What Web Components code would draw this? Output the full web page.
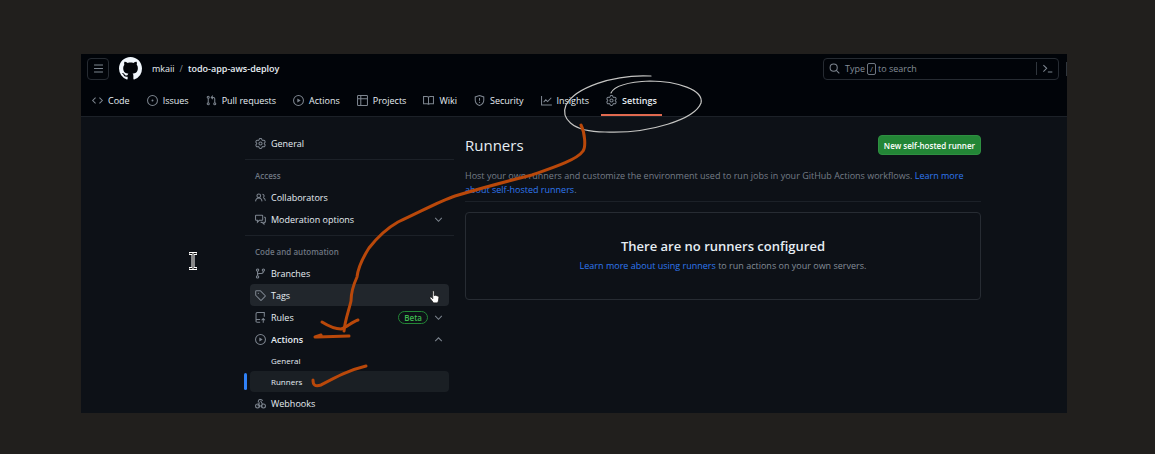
<!DOCTYPE html>
<html lang="en">
<head>
<meta charset="utf-8">
<title>Runners · todo-app-aws-deploy</title>
<style>
body { margin: 0; background: #211f1d; font-family: "Open Sans", "Noto Sans", sans-serif; font-size: 9px; color: #e6edf3; }
</style>
</head>
<body>
<settings-page></settings-page>
<script>
const GEAR = '<path transform="translate(.7 .7) scale(.9125)" stroke-width="1.6" d="M8 0a8.2 8.2 0 0 1 .701.031C9.444.095 9.99.645 10.16 1.29l.288 1.107c.018.066.079.158.212.224.231.114.454.243.668.386.123.082.233.09.299.071l1.103-.303c.644-.176 1.392.021 1.82.63.27.385.506.792.704 1.218.315.675.111 1.422-.364 1.891l-.814.806c-.049.048-.098.147-.088.294.016.257.016.515 0 .772-.01.147.038.246.088.294l.814.806c.475.469.679 1.216.364 1.891a7.977 7.977 0 0 1-.704 1.217c-.428.61-1.176.807-1.82.63l-1.102-.302c-.067-.019-.177-.011-.3.071a5.909 5.909 0 0 1-.668.386c-.133.066-.194.158-.211.224l-.29 1.106c-.168.646-.715 1.196-1.458 1.26a8.006 8.006 0 0 1-1.402 0c-.743-.064-1.289-.614-1.458-1.26l-.289-1.106c-.018-.066-.079-.158-.212-.224a5.738 5.738 0 0 1-.668-.386c-.123-.082-.233-.09-.299-.071l-1.103.303c-.644.176-1.392-.021-1.82-.63a8.12 8.12 0 0 1-.704-1.218c-.315-.675-.111-1.422.363-1.891l.815-.806c.05-.048.098-.147.088-.294a6.214 6.214 0 0 1 0-.772c.01-.147-.038-.246-.088-.294l-.815-.806C.635 6.045.431 5.298.746 4.623a7.92 7.92 0 0 1 .704-1.217c.428-.61 1.176-.807 1.82-.63l1.102.302c.067.019.177.011.3-.071.214-.143.437-.272.668-.386.133-.066.194-.158.211-.224l.29-1.106C6.009.645 6.556.095 7.299.03 7.53.01 7.764 0 8 0Z"/><circle cx="8" cy="8" r="2.3"/>';
const ICONS = {
  menu: '<path d="M1.500 3h13M1.500 8h13M1.500 13h13"/>',
  mark: '<path fill="currentColor" stroke="none" d="M8 0c4.42 0 8 3.58 8 8a8.013 8.013 0 0 1-5.45 7.59c-.4.08-.55-.17-.55-.38 0-.27.01-1.13.01-2.2 0-.75-.25-1.23-.54-1.48 1.78-.2 3.65-.88 3.65-3.95 0-.88-.31-1.59-.82-2.15.08-.2.36-1.02-.08-2.12 0 0-.67-.22-2.2.82-.64-.18-1.32-.27-2-.27-.68 0-1.36.09-2 .27-1.53-1.03-2.2-.82-2.2-.82-.44 1.1-.16 1.92-.08 2.12-.51.56-.82 1.28-.82 2.15 0 3.06 1.86 3.75 3.64 3.95-.23.2-.44.55-.51 1.07-.46.21-1.61.55-2.33-.66-.15-.24-.6-.83-1.23-.82-.67.01-.27.38.01.53.34.19.73.9.82 1.13.16.45.68 1.31 2.69.94 0 .67.01 1.3.01 1.49 0 .21-.15.45-.55.38A7.995 7.995 0 0 1 0 8c0-4.42 3.58-8 8-8Z"/>',
  code: '<path d="M5.200 3.800 1 8l4.200 4.200M10.800 3.800 15 8l-4.200 4.200"/>',
  issue: '<circle cx="8" cy="8" r="7.200"/><circle cx="8" cy="8" r="1.400" fill="currentColor" stroke="none"/>',
  pull: '<circle cx="3.250" cy="3.250" r="1.500"/><circle cx="3.250" cy="12.750" r="1.500"/><circle cx="12.750" cy="12.750" r="1.500"/><path d="M3.250 4.750v6.500M12.750 11.250V5.500c0-1.200-.8-2-2-2H8M10 1 7.600 3.500 10 6"/>',
  play: '<circle cx="8" cy="8" r="7.200"/><path fill="currentColor" stroke="none" d="M6.300 5.200v5.600L11.200 8Z"/>',
  project: '<rect x=".8" y=".8" width="14.400" height="14.400" rx="1"/><path d="M5.500 1v14M1 5.500h14"/>',
  book: '<path d="M8 4c0-.9-.9-1.800-2.200-1.800H.8v10.600h5.400c1 0 1.800.6 1.800 1.400 0-.8.8-1.400 1.800-1.400h5.400V2.200h-5C8.900 2.200 8 3.100 8 4v10"/>',
  shield: '<path d="M8 .8 14.200 2.900v4.600c0 3.700-2.600 6.300-6.200 7.700-3.600-1.400-6.200-4-6.200-7.700V2.900ZM8 4.300v4"/><circle cx="8" cy="10.700" r="1" fill="currentColor" stroke="none"/>',
  graph: '<path d="M.8 1.500v13h15M3.800 10.500 7 7l2.600 2.600L15 4"/>',
  gear: GEAR,
  people: '<circle cx="5.500" cy="5.500" r="2.700"/><path d="M.8 13.700c.3-3 2.200-4.900 4.700-4.900s4.400 1.900 4.700 4.900M10.800 3.300a2.400 2.400 0 0 1 1.200 4.500M12 8.200c1.700.8 2.800 2.400 3.100 4.500"/>',
  discuss: '<path d="M1.700 1.800h8.600c.6 0 .9.300.9.900v5.600c0 .6-.3.900-.9.900H6.200L3.500 11.900V9.200H1.700c-.6 0-.9-.3-.9-.9V2.700c0-.6.3-.9.9-.9ZM13.200 4.800h1c.6 0 .9.300.9.900v5.600c0 .6-.3.900-.9.900h-1.200v2.500l-2.700-2.500H8.200"/>',
  branch: '<circle cx="3.700" cy="3" r="1.700"/><circle cx="3.700" cy="13" r="1.700"/><circle cx="12.200" cy="3" r="1.700"/><path d="M3.700 4.700v6.600M12.200 4.700c0 2-1 3.300-3 3.300H6c-1.300 0-2.300.8-2.300 2"/>',
  tag: '<path d="M1 2v5.300c0 .3.100.5.300.7l6.700 6.700c.4.400 1 .4 1.400 0l5.300-5.300c.4-.4.4-1 0-1.400L8 1.300A1 1 0 0 0 7.300 1H2a1 1 0 0 0-1 1Z"/><circle cx="4.900" cy="4.900" r="1" fill="currentColor" stroke="none"/>',
  rules: '<path d="M7.500 15H3.200A1.700 1.700 0 0 1 1.500 13.300V2.700C1.500 1.600 2.300.8 3.400.8h10.100V7M1.500 12.500c0-1 .8-1.700 1.700-1.700h4.300M12 15.500V9.800M9.500 12 12 9.500l2.500 2.500"/>',
  webhook: '<circle cx="3.700" cy="11.500" r="2.900"/><circle cx="12.300" cy="11.500" r="2.900"/><path d="M5 6.500a3.200 3.200 0 1 1 6-2.400M4 11.400 6.700 6.700M8.100 3.900l3 5.400M4.500 11.500h6.800"/>',
  search: '<circle cx="6.800" cy="6.800" r="5.200"/><path d="m10.700 10.700 4.300 4.300"/>',
  terminal: '<path d="m2 3 4.800 4.700L2 12.400M8.500 13H15"/>',
  down: '<path d="m3.200 5.800 4.800 4.800 4.800-4.800"/>',
  up: '<path d="m3.200 10.400 4.800-4.800 4.800 4.800"/>'
};

function define(name, css, html) {
  customElements.define(name, class extends HTMLElement {
    connectedCallback() {
      if (this.shadowRoot) return;
      const body = typeof html === 'function' ? html(this) : html;
      this.attachShadow({ mode: 'open' }).innerHTML = `<style>*{box-sizing:border-box}${css}</style>${body}`;
    }
  });
}

define('gh-icon',
  `:host{display:block;flex:none;width:11px;height:11px;color:#7d858f}
   svg{display:block;width:100%;height:100%;overflow:visible}`,
  el => `<svg viewBox="0 0 16 16" fill="none" stroke="currentColor" stroke-width="1.500" aria-hidden="true">${ICONS[el.getAttribute('name')]}</svg>`);

define('repo-tab',
  `:host{display:block}
   a{display:flex;align-items:center;gap:5px;height:33px;padding:4px 5px 0;color:inherit;text-decoration:none;white-space:nowrap;border-bottom:2px solid transparent}
   :host([current]) a{font-weight:600;border-bottom-color:#e0694f}`,
  el => `<a href="#"><gh-icon name="${el.getAttribute('icon')}"></gh-icon><span><slot></slot></span></a>`);

define('search-box',
  `:host{display:block;flex:0 1 236px;min-width:0}
   .box{display:flex;align-items:center;height:22px;border:1px solid #262b32;border-radius:4px;padding-right:5px}
   button{font:inherit;color:#848d97;background:none;border:0;padding:0;display:flex;align-items:center}
   .query{flex:1;gap:5px;padding-left:5px;white-space:nowrap}
   kbd{display:inline-block;font:inherit;font-size:8px;line-height:10px;width:9px;text-align:center;border:1px solid #6e7681;border-radius:2px;margin:0 2px}
   .cmd{border-left:1px solid #30363d;padding:1px 0 1px 5px}`,
  `<div class="box"><button class="query"><gh-icon name="search"></gh-icon><span>Type<kbd>/</kbd>to search</span></button><button class="cmd" aria-label="Command palette"><gh-icon name="terminal"></gh-icon></button></div>`);

define('app-header',
  `:host{display:block;background:#010409;border-bottom:1px solid #1c2128}
   .top{display:flex;align-items:center;height:29px;padding:0 0 0 6px}
   .menu{width:22px;height:22px;padding:0;display:grid;place-items:center;background:none;border:1px solid #262b32;border-radius:4px}
   .logo{margin:0 10px;color:#f0f6fc}
   .logo gh-icon{width:23px;height:23px;color:inherit}
   .crumbs{display:flex;gap:5px;flex:1;white-space:nowrap}
   .crumbs a{color:inherit;text-decoration:none}
   .crumbs span{color:#848d97}
   .crumbs a:last-child{font-weight:600}
   .edge{width:1px;height:14px;background:#30363d;margin-left:7px}
   nav.tabs{display:flex;gap:7px;padding:0 6px}`,
  `<div class="top">
     <button class="menu" aria-label="Open menu"><gh-icon name="menu"></gh-icon></button>
     <a class="logo" href="#" aria-label="Homepage"><gh-icon name="mark"></gh-icon></a>
     <nav class="crumbs"><a href="#">mkaii</a><span>/</span><a href="#">todo-app-aws-deploy</a></nav>
     <search-box></search-box><div class="edge"></div>
   </div>
   <nav class="tabs">
     <repo-tab icon="code">Code</repo-tab><repo-tab icon="issue">Issues</repo-tab><repo-tab icon="pull">Pull requests</repo-tab>
     <repo-tab icon="play">Actions</repo-tab><repo-tab icon="project">Projects</repo-tab><repo-tab icon="book">Wiki</repo-tab>
     <repo-tab icon="shield">Security</repo-tab><repo-tab icon="graph">Insights</repo-tab><repo-tab icon="gear" current>Settings</repo-tab>
   </nav>`);

define('side-item',
  `:host{display:block;position:relative;padding:0 5px}
   a{display:flex;align-items:center;gap:5px;height:22px;padding:0 5px;border-radius:4px;color:inherit;text-decoration:none;white-space:nowrap}
   .label{flex:1}
   :host([bold]) a{font-weight:600}
   :host([sub]) a{height:21px;padding-left:21px;font-size:8px}
   :host([hover]) a{background:#21262c}
   :host([current]) a{background:#1a1f24}
   :host([current])::before{content:"";position:absolute;left:-1px;top:2px;bottom:2px;width:3px;border-radius:2px;background:#2f81f7}`,
  el => {
    const icon = el.getAttribute('icon'), fold = el.getAttribute('fold');
    return `<a href="#">${icon ? `<gh-icon name="${icon}"></gh-icon>` : ''}<span class="label"><slot></slot></span><slot name="badge"></slot>${fold ? `<gh-icon name="${fold}"></gh-icon>` : ''}</a>`;
  });

define('beta-badge',
  `:host{display:block;border:1px solid #238636;border-radius:7px;padding:0 5px;font-size:8px;line-height:11px;font-weight:600;color:#3fb950}`,
  `<slot></slot>`);

define('side-group',
  `:host{display:block;padding-bottom:5px}
   :host(:not(:first-of-type)){border-top:1px solid #1c2128;padding-top:6px}
   h3{margin:0;padding:0 10px;font-size:8px;line-height:20px;font-weight:600;color:#6e7681}`,
  el => `${el.getAttribute('heading') ? `<h3>${el.getAttribute('heading')}</h3>` : ''}<slot></slot>`);

define('settings-sidebar',
  `:host{display:block;flex:0 0 209px;padding-top:15px}`,
  `<nav>
    <side-group><side-item icon="gear">General</side-item></side-group>
    <side-group heading="Access">
      <side-item icon="people">Collaborators</side-item>
      <side-item icon="discuss" fold="down">Moderation options</side-item>
    </side-group>
    <side-group heading="Code and automation">
      <side-item icon="branch">Branches</side-item>
      <side-item icon="tag" hover>Tags</side-item>
      <side-item icon="rules" fold="down">Rules<beta-badge slot="badge">Beta</beta-badge></side-item>
      <side-item icon="play" fold="up" bold>Actions</side-item>
      <side-item sub>General</side-item>
      <side-item sub current>Runners</side-item>
      <side-item icon="webhook">Webhooks</side-item>
    </side-group>
  </nav>`);

define('blank-slate',
  `:host{display:block;border:1px solid #272c33;border-radius:4px;padding:22px 22px 24px;text-align:center}
   h3{margin:0;font-size:13px;line-height:22px;font-weight:600}
   p{margin:0;line-height:18px;color:#848d97}`,
  `<h3><slot name="title"></slot></h3><p><slot></slot></p>`);

define('runners-panel',
  `:host{display:block;flex:1;min-width:0;padding-top:16px}
   header{display:flex;align-items:center;justify-content:space-between;height:24px}
   h2{margin:0;font-size:15px;font-weight:400}
   button{font:inherit;font-size:8px;font-weight:600;color:#fff;background:#238636;border:1px solid #2e8f41;border-radius:4px;height:20px;padding:0 5px;white-space:nowrap}
   .intro{margin:0 0 10px;padding:12px 0 4px;line-height:14px;color:#757d87;border-bottom:1px solid #1c2128}
   a{color:#2f78f0;text-decoration:none}`,
  `<header><h2>Runners</h2><button>New self-hosted runner</button></header>
   <p class="intro">Host your own runners and customize the environment used to run jobs in your GitHub Actions workflows. <a href="#">Learn more about self-hosted runners</a>.</p>
   <blank-slate><span slot="title">There are no runners configured</span><a href="#">Learn more about using runners</a> to run actions on your own servers.</blank-slate>`);

define('ink-layer',
  `:host{position:absolute;inset:0;pointer-events:none}
   svg{display:block;width:100%}`,
  `<svg viewBox="81 54 986 359" fill="none" stroke-linecap="round" stroke-linejoin="round" aria-hidden="true">
    <path stroke="#c4c4c2" stroke-width="1.200" d="M651 76C613 74 575 88 566 105C561 117 570 132 605 132C650 134 695 119 701 103C704 90 677 81 650 81C628 82 614 86 611 93"/>
    <g stroke="#b9480a" stroke-width="3">
      <path d="M581 125C585 133 586 147 583 151C577 160 552 168 532 175C500 183 475 190 455 196C440 201 422 211 398 222C384 230 376 239 369 248C362 259 358 268 357 277C352 288 351 295 351 301C349 310 345 320 344 331"/>
      <path d="M322 322C330 327 337 329 341 329C347 327 352 322 358 320"/>
      <path d="M315 337L321 335L317 337L349 336"/>
      <path d="M313 380C313 385 315 387 321 385C336 377 349 370 366 366"/>
    </g>
    <path stroke="#fff" stroke-width="3" stroke-linecap="square" d="M190.500 253.500h5M193 255v12M190.500 268.500h5"/>
    <path stroke="#111" stroke-width="1" stroke-linecap="butt" d="M189.500 253.500h3M193.500 253.500h3M193 254v14M189.500 268.500h3M193.500 268.500h3"/>
    <path fill="#fff" stroke="#111" stroke-width=".8" d="M432.500 291.500c0-1 1.700-1 1.700 0v4l1.400-.2 1.200.4 1.200.4c.8.200 1 .8.900 1.600l-.4 3.200-1 2h-4l-3.400-4.500c-.7-1 .4-1.800 1.300-1.100l1.100 1.100Z"/>
  </svg>`);

define('settings-page',
  `:host{display:block;padding:54px 88px 41px 81px}
   .window{position:relative;overflow:hidden;background:#0d1117}
   .body{display:flex;gap:11px;padding:0 86px 0 164px}
   settings-sidebar{margin-bottom:-6px}`,
  `<div class="window"><app-header></app-header><div class="body"><settings-sidebar></settings-sidebar><runners-panel></runners-panel></div><ink-layer></ink-layer></div>`);
</script>
</body>
</html>
